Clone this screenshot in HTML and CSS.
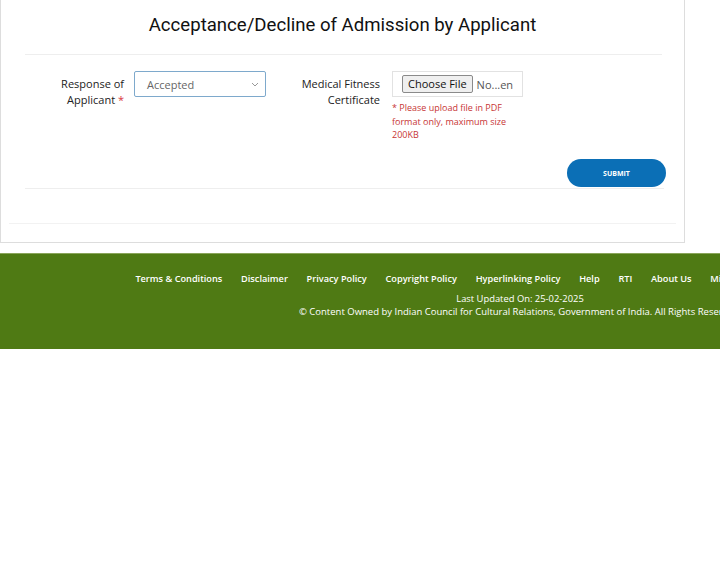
FILE: index.html
```html
<!DOCTYPE html>
<html lang="en">
<head>
    <meta charset="UTF-8">
    <meta name="viewport" content="width=device-width, initial-scale=1.0">
    <title>Acceptance/Decline of Admission by Applicant</title>
    <link rel="stylesheet" href="styles.css">
</head>
<body>
    <div class="card">
        <h1>Acceptance/Decline of Admission by Applicant</h1>
        <hr class="rule">

        <form class="form-row">
            <label class="field-label label-response">Response of Applicant <span class="req">*</span></label>
            <div class="select-box">
                <span>Accepted</span>
                <svg class="chevron" width="8" height="5" viewBox="0 0 8 5"><path d="M1 1l3 3 3-3" fill="none" stroke="#999" stroke-width="1"/></svg>
            </div>

            <label class="field-label label-medical">Medical Fitness Certificate</label>
            <div class="file-col">
                <div class="file-box">
                    <span class="file-btn">Choose File</span>
                    <span class="file-name">No...en</span>
                </div>
                <p class="hint">* Please upload file in PDF format only, maximum size 200KB</p>
            </div>
        </form>

        <div class="actions">
            <button type="button" class="btn-submit">SUBMIT</button>
        </div>
        <hr class="rule">
        <hr class="rule rule-wide">
    </div>

    <footer class="site-footer">
        <nav class="footer-links">
            <a href="#">Terms &amp; Conditions</a>
            <a href="#">Disclaimer</a>
            <a href="#">Privacy Policy</a>
            <a href="#">Copyright Policy</a>
            <a href="#">Hyperlinking Policy</a>
            <a href="#">Help</a>
            <a href="#">RTI</a>
            <a href="#">About Us</a>
            <a href="#">Mission &amp; Vision</a>
            <a href="#">Contact Us</a>
            <a href="#">Sitemap</a>
        </nav>
        <p class="updated">Last Updated On: 25-02-2025</p>
        <p class="copyright">&copy; Content Owned by Indian Council for Cultural Relations, Government of India. All Rights Reserved.</p>
    </footer>
</body>
</html>
```

FILE: styles.css
```css
body {
    margin: 0;
    background: #fff;
    font-family: 'Open Sans', sans-serif;
    color: #222;
    overflow: hidden;
}
.card {
    width: 683px;
    border: 1px solid #ddd;
    border-top: none;
    background: #fff;
    padding-bottom: 18px;
}
h1 {
    font-family: Roboto, sans-serif;
    font-weight: 400;
    font-size: 18.6px;
    color: #111;
    text-align: center;
    margin: 0;
    padding-top: 12px;
    height: 42px;
    line-height: 26px;
    box-sizing: border-box;
}
.rule {
    border: none;
    border-top: 1px solid #eeeeee;
    margin: 0 20px 0 24px;
}
.rule-wide {
    margin: 34px 8px 0 8px;
    border-top-color: #f2f2f2;
}
h1 + .rule {
    margin-top: 12px;
    margin-right: 22px;
}
.form-row {
    display: flex;
    align-items: flex-start;
    padding: 16px 0 0 24px;
    height: 88px;
}
.field-label {
    font-size: 11px;
    line-height: 16px;
    color: #222;
    text-align: right;
    padding-top: 5px;
}
.label-response {
    width: 99px;
    flex-shrink: 0;
}
.label-medical {
    width: 90px;
    margin-left: 24px;
    flex-shrink: 0;
}
.req {
    color: #d9363e;
}
.select-box {
    box-sizing: border-box;
    width: 132px;
    height: 26px;
    margin-left: 10px;
    border: 1px solid #7ea9cc;
    border-radius: 2px;
    display: flex;
    align-items: center;
    justify-content: space-between;
    padding: 0 6px 0 12px;
    font-size: 11px;
    color: #666;
}
.file-col {
    margin-left: 12px;
    width: 131px;
}
.file-box {
    height: 26px;
    border: 1px solid #e2e2e2;
    box-sizing: border-box;
    display: flex;
    align-items: center;
    padding-left: 9px;
    gap: 4px;
    font-size: 11px;
    color: #555;
}
.file-btn {
    border: 1px solid #8a8a8a;
    border-radius: 2px;
    background: #efefef;
    color: #111;
    padding: 0 5px;
    height: 16px;
    line-height: 16px;
}
.hint {
    margin: 4px 0 0 0;
    font-size: 9px;
    line-height: 13.5px;
    color: #c73535;
}
.actions {
    display: flex;
    justify-content: flex-end;
    padding-right: 18px;
    margin-bottom: 1px;
}
.btn-submit {
    width: 99px;
    height: 28px;
    border: none;
    border-radius: 14px;
    background: #0b6fb6;
    color: #fff;
    font-family: 'Open Sans', sans-serif;
    font-weight: 700;
    font-size: 7px;
}
.site-footer {
    margin-top: 10px;
    width: 1040px;
    height: 96px;
    background: #4f7a14;
    border-top: 1px solid #8aa55a;
    color: #fff;
    text-align: center;
    padding-top: 11px;
    box-sizing: border-box;
}
.footer-links a {
    color: #fff;
    text-decoration: none;
    font-size: 9.2px;
    font-weight: 600;
    margin: 0 7.3px;
}
.updated,
.copyright {
    margin: 0;
    font-size: 9.4px;
    line-height: 13px;
    font-weight: 500;
}
.copyright {
    font-size: 9.5px;
}
.updated {
    margin-top: 5px;
}
```
